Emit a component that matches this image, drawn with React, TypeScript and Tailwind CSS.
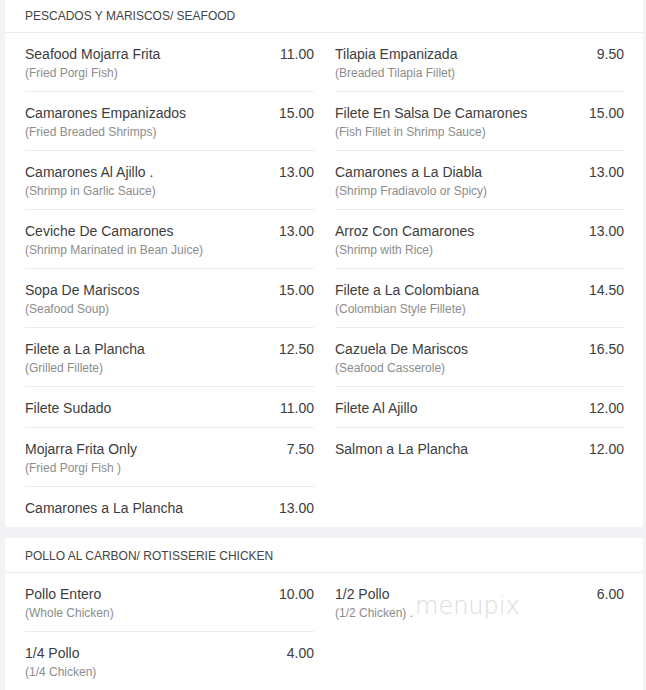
type Item = { name: string; desc?: string; price: string };

const seafood: Item[] = [
  { name: "Seafood Mojarra Frita", desc: "(Fried Porgi Fish)", price: "11.00" },
  { name: "Tilapia Empanizada", desc: "(Breaded Tilapia Fillet)", price: "9.50" },
  { name: "Camarones Empanizados", desc: "(Fried Breaded Shrimps)", price: "15.00" },
  { name: "Filete En Salsa De Camarones", desc: "(Fish Fillet in Shrimp Sauce)", price: "15.00" },
  { name: "Camarones Al Ajillo .", desc: "(Shrimp in Garlic Sauce)", price: "13.00" },
  { name: "Camarones a La Diabla", desc: "(Shrimp Fradiavolo or Spicy)", price: "13.00" },
  { name: "Ceviche De Camarones", desc: "(Shrimp Marinated in Bean Juice)", price: "13.00" },
  { name: "Arroz Con Camarones", desc: "(Shrimp with Rice)", price: "13.00" },
  { name: "Sopa De Mariscos", desc: "(Seafood Soup)", price: "15.00" },
  { name: "Filete a La Colombiana", desc: "(Colombian Style Fillete)", price: "14.50" },
  { name: "Filete a La Plancha", desc: "(Grilled Fillete)", price: "12.50" },
  { name: "Cazuela De Mariscos", desc: "(Seafood Casserole)", price: "16.50" },
  { name: "Filete Sudado", price: "11.00" },
  { name: "Filete Al Ajillo", price: "12.00" },
  { name: "Mojarra Frita Only", desc: "(Fried Porgi Fish )", price: "7.50" },
  { name: "Salmon a La Plancha", price: "12.00" },
  { name: "Camarones a La Plancha", price: "13.00" },
];

const chicken: Item[] = [
  { name: "Pollo Entero", desc: "(Whole Chicken)", price: "10.00" },
  { name: "1/2 Pollo", desc: "(1/2 Chicken) .", price: "6.00" },
  { name: "1/4 Pollo", desc: "(1/4 Chicken)", price: "4.00" },
];

function Section({ title, items, className = "" }: { title: string; items: Item[]; className?: string }) {
  return (
    <section className={`bg-white ${className}`}>
      <div className="h-[35px] flex items-center pt-[1px] px-5 border-b border-[#ececec] text-[12px] text-[#444] uppercase">
        {title}
      </div>
      <div className="grid grid-cols-2 gap-x-[21px] pl-5 pr-[19px]">
        {items.map((it, i) => {
          // last entry of each column has no rule under it
          const isLast = i + 2 >= items.length;
          return (
            <div
              key={i}
              className={`flex justify-between pt-[11px] ${
                it.desc ? "pb-[8px]" : "pb-[9px]"
              } ${isLast ? "" : "border-b border-[#ececec]"}`}
            >
              <div>
                <div className="text-[14px] leading-[20px] text-[#3d3d3d]">{it.name}</div>
                {it.desc && <div className="text-[12px] leading-[19px] text-[#8c8c8c]">{it.desc}</div>}
              </div>
              <div className="text-[14px] leading-[20px] text-[#3d3d3d]">{it.price}</div>
            </div>
          );
        })}
      </div>
    </section>
  );
}

export default function App() {
  return (
    <div className="h-[690px] overflow-hidden bg-[#f3f3f5] pl-[5px] pr-[3px] font-['Liberation_Sans',Arial,sans-serif]">
      <Section title="Pescados y Mariscos/ Seafood" items={seafood} className="-mt-[2px]" />
      <div className="relative">
        <Section title="Pollo al Carbon/ Rotisserie Chicken" items={chicken} className="mt-[11px]" />
        <span className="absolute left-[410px] top-[54px] text-[24px] leading-[28px] font-['DejaVu_Sans',sans-serif] font-extralight text-[#dcdcdc]">
          menupix
        </span>
      </div>
    </div>
  );
}
